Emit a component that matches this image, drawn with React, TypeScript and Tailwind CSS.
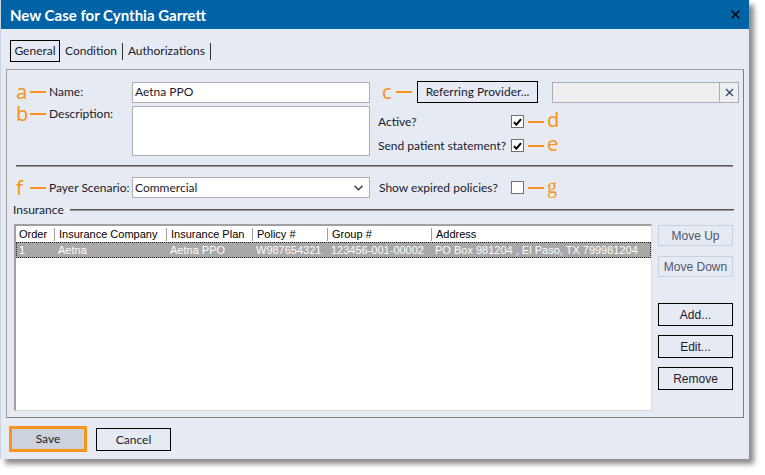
import React from "react";

const Letter = ({ ch, serif }: { ch: string; serif?: boolean }) => (
  <span
    className={
      "w-[14px] text-[#F7941D] text-[20px] leading-[16px] " +
      (serif ? "font-['Liberation_Serif',serif]" : "font-['Noto_Sans',sans-serif]")
    }
  >
    {ch}
  </span>
);

const Dash = () => <span className="w-[16px] h-[2px] bg-[#F7941D] shrink-0" />;

const Check = ({ on }: { on?: boolean }) => (
  <span className="w-[13px] h-[13px] border border-[#707070] bg-white flex items-center justify-center shrink-0">
    {on && (
      <svg width="9" height="8" viewBox="0 0 9 8">
        <path d="M1 4.2 L3.4 6.6 L8 1.2" stroke="#000" strokeWidth="2" fill="none" />
      </svg>
    )}
  </span>
);

const cols = [
  { w: "w-[38px]", h: "Order", v: "1", sep: false },
  { w: "w-[112px]", h: "Insurance Company", v: "Aetna", sep: true },
  { w: "w-[86px]", h: "Insurance Plan", v: "Aetna PPO", sep: true },
  { w: "w-[75px]", h: "Policy #", v: "W987654321", sep: true },
  { w: "w-[104px]", h: "Group #", v: "123456-001-00002", sep: true },
  { w: "flex-1", h: "Address", v: "PO Box 981204 , El Paso, TX 799981204", sep: true },
];

export default function App() {
  return (
    <div className="w-[765px] h-[475px] bg-white font-['Lato',sans-serif] text-[12px] leading-[16px] text-[#1A1A2E] whitespace-nowrap">
      <div className="w-[749px] h-[459px] flex flex-col bg-[#E6EBF3] shadow-[5px_5px_5px_rgba(0,0,0,0.45)] border-l border-[#C9D3E2]">
        {/* title bar */}
        <div className="h-[29px] shrink-0 bg-[#0063A6] flex items-center justify-between pl-[9px] pr-[9px]">
          <span className="text-white font-bold text-[15px] leading-[20px]">New Case for Cynthia Garrett</span>
          <svg width="9" height="9" viewBox="0 0 9 9">
            <path d="M0.5 0.5 L8.5 8.5 M8.5 0.5 L0.5 8.5" stroke="#000" strokeWidth="1.4" />
          </svg>
        </div>

        <div className="flex-1 flex flex-col px-[5px]">
          {/* tabs */}
          <div className="mt-[11px] ml-[4px] flex items-center h-[22px]">
            <div className="w-[50px] h-[22px] border border-black flex items-center justify-center">General</div>
            <div className="px-[5px]">Condition</div>
            <div className="w-px h-[17px] bg-[#333]" />
            <div className="px-[5px]">Authorizations</div>
            <div className="w-px h-[17px] bg-[#333]" />
          </div>

          {/* panel */}
          <div className="mt-[7px] h-[349px] border border-[#A0A0A0] border-b-[#7E7E7E] border-r-[#7E7E7E] flex flex-col">
            {/* row 1 */}
            <div className="mt-[11px] flex items-center h-[22px]">
              <div className="w-[125px] pl-[9px] flex items-center">
                <Letter ch="a" />
                <Dash />
                <span className="ml-[3px]">Name:</span>
              </div>
              <div className="w-[238px] h-[21px] border border-[#ABADB3] bg-white flex items-center pl-[2px]">Aetna PPO</div>
              <div className="ml-[12px] flex items-center">
                <Letter ch="c" />
                <Dash />
                <div className="ml-[5px] w-[121px] h-[22px] border border-black flex items-center justify-center">
                  Referring Provider...
                </div>
                <div className="ml-[14px] w-[187px] h-[21px] border border-[#ABADB3] bg-[#EDEEF0] flex justify-end">
                  <div className="w-[19px] h-full border-l border-[#ABADB3] flex items-center justify-center">
                    <svg width="9" height="9" viewBox="0 0 9 9">
                      <path d="M1 1 L8 8 M8 1 L1 8" stroke="#2E4A68" strokeWidth="1.4" />
                    </svg>
                  </div>
                </div>
              </div>
            </div>

            {/* row 2 */}
            <div className="mt-[3px] flex items-start">
              <div className="w-[125px] pl-[9px] flex items-center h-[16px]">
                <Letter ch="b" />
                <Dash />
                <span className="ml-[3px]">Description:</span>
              </div>
              <div className="w-[238px] h-[50px] border border-[#ABADB3] bg-white" />
              <div className="ml-[8px] flex flex-col">
                <div className="mt-[9px] flex items-center h-[13px]">
                  <span className="w-[133px]">Active?</span>
                  <Check on />
                  <span className="ml-[4px]" />
                  <Dash />
                  <span className="ml-[3px]"><Letter ch="d" /></span>
                </div>
                <div className="mt-[11px] flex items-center h-[13px]">
                  <span className="w-[133px]">Send patient statement?</span>
                  <Check on />
                  <span className="ml-[4px]" />
                  <Dash />
                  <span className="ml-[3px]"><Letter ch="e" /></span>
                </div>
              </div>
            </div>

            {/* separator */}
            <div className="mt-[9px] ml-[9px] w-[717px] flex flex-col">
              <div className="h-px bg-[#555]" />
              <div className="h-px bg-[#9A9A9A]" />
            </div>

            {/* row 3 */}
            <div className="mt-[10px] flex items-center h-[21px]">
              <div className="w-[125px] pl-[9px] flex items-center">
                <Letter ch="f" />
                <Dash />
                <span className="ml-[3px]">Payer Scenario:</span>
              </div>
              <div className="w-[238px] h-[21px] border border-[#ABADB3] bg-white flex items-center justify-between pl-[2px] pr-[6px]">
                <span>Commercial</span>
                <svg width="9" height="6" viewBox="0 0 9 6">
                  <path d="M0.5 0.8 L4.5 4.8 L8.5 0.8" stroke="#333" strokeWidth="1.3" fill="none" />
                </svg>
              </div>
              <div className="ml-[9px] flex items-center">
                <span className="w-[132px]">Show expired policies?</span>
                <Check />
                <span className="ml-[4px]" />
                <Dash />
                <span className="ml-[3px]"><Letter ch="g" serif /></span>
              </div>
            </div>

            {/* insurance header */}
            <div className="mt-[4px] h-[16px] flex items-center">
              <span className="ml-[6px]">Insurance</span>
              <div className="ml-[6px] mr-[9px] flex-1 flex flex-col">
                <div className="h-px bg-[#555]" />
                <div className="h-px bg-[#9A9A9A]" />
              </div>
            </div>

            {/* table + buttons */}
            <div className="mt-[6px] flex items-start">
              <div className="ml-[7px] w-[638px] h-[187px] bg-white border-t-2 border-l-2 border-t-[#A0A0A0] border-l-[#A0A0A0] border-b border-r border-b-[#DADADA] border-r-[#DADADA] flex flex-col font-['Liberation_Sans',Arial,sans-serif] text-[11px]">
                <div className="h-[16px] flex items-center text-black">
                  {cols.map((c) => (
                    <div key={c.h} className={c.w + " h-full flex items-center overflow-hidden"}>
                      {c.sep && <span className="w-px h-[13px] bg-[#A0A0A0] shrink-0" />}
                      <span className={c.sep ? "pl-[4px]" : "pl-[3px]"}>{c.h}</span>
                    </div>
                  ))}
                </div>
                <div className="h-[16px] flex items-center bg-[#A8A8A8] text-white border border-dotted border-[#222]">
                  {cols.map((c, i) => (
                    <div key={c.h} className={(i === 0 ? "w-[37px] pl-[2px]" : c.w + " pl-[4px]") + " overflow-hidden"}>
                      {c.v}
                    </div>
                  ))}
                </div>
              </div>
              <div className="ml-[6px] w-[75px] flex flex-col font-['Liberation_Sans',Arial,sans-serif] text-[12px]">
                <div className="mt-px h-[21px] border border-[#C8D2DF] flex items-center justify-center text-[#4E5470]">Move Up</div>
                <div className="mt-[10px] h-[21px] border border-[#C8D2DF] flex items-center justify-center text-[#4E5470]">Move Down</div>
                <div className="mt-[26px] h-[23px] border border-black flex items-center justify-center text-[#1A1A2E]">Add...</div>
                <div className="mt-[9px] h-[23px] border border-black flex items-center justify-center text-[#1A1A2E]">Edit...</div>
                <div className="mt-[9px] h-[23px] border border-black flex items-center justify-center text-[#1A1A2E]">Remove</div>
              </div>
            </div>
          </div>

          {/* footer */}
          <div className="mt-[8px] flex items-start">
            <div className="ml-[3px] w-[78px] h-[26px] border-[3px] border-[#F7941D] bg-[#CDD3DC] flex items-center justify-center">Save</div>
            <div className="ml-[9px] mt-[2px] w-[75px] h-[23px] border border-black flex items-center justify-center">Cancel</div>
          </div>
        </div>
      </div>
    </div>
  );
}
